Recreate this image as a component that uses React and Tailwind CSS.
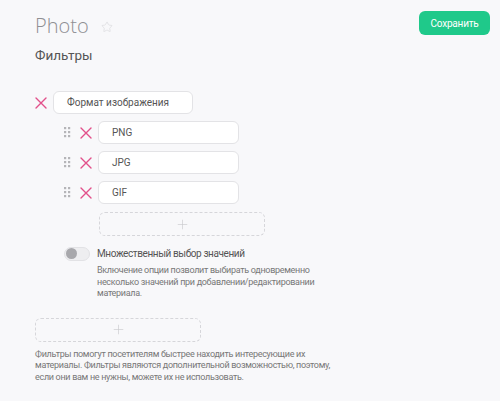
import { Star, Plus } from 'lucide-react'

function Dots() {
  return (
    <svg width="7" height="11" viewBox="0 0 7 11" className="text-[#b5b5b8]">
      {[0, 4, 8].map((y) =>
        [0, 4].map((x) => <rect key={`${x}-${y}`} x={x} y={y} width="2.2" height="2.2" fill="currentColor" />)
      )}
    </svg>
  )
}

function Cross({ className = '' }) {
  return (
    <svg width="12" height="12" viewBox="0 0 12 12" className={`text-[#e2508a] ${className}`}>
      <path d="M1 1L11 11M11 1L1 11" stroke="currentColor" strokeWidth="1.4" strokeLinecap="round" />
    </svg>
  )
}

function Field({ value, className = '' }) {
  return (
    <div
      className={`h-[23px] flex items-center bg-white border border-[#e3e3e6] rounded-[6px] text-[10px] text-[#555] ${className}`}
    >
      {value}
    </div>
  )
}

function AddBox({ className = '' }) {
  return (
    <div
      className={`h-[24px] flex items-center justify-center border border-dashed border-[#d6d6da] rounded-[6px] ${className}`}
    >
      <Plus size={15} strokeWidth={1} className="text-[#c8c8cc]" />
    </div>
  )
}

export default function App() {
  const values = ['PNG', 'JPG', 'GIF']
  return (
    <div className="w-[500px] h-[401px] bg-[#f8f8fa] font-['Roboto',sans-serif] overflow-hidden relative">
      <div className="pl-[35px] pt-[11px]">
        <div className="flex items-center gap-[12px] h-[30px]">
          <span className="font-['Open_Sans',sans-serif] font-light text-[20px] leading-[30px] text-[#8f8f93]">Photo</span>
          <Star size={12} strokeWidth={1.3} className="text-[#d8d8dc] mt-[1px]" />
        </div>
        <div className="mt-[4px] text-[13.5px] leading-[20px] text-[#555]">Фильтры</div>

        <div className="mt-[26px] flex items-center gap-[6px]">
          <Cross />
          <Field value="Формат изображения" className="w-[140px] pl-[13px]" />
        </div>

        <div className="mt-[7px] pl-[29px] flex flex-col gap-[7px]">
          {values.map((v) => (
            <div key={v} className="flex items-center">
              <Dots />
              <Cross className="ml-[9px]" />
              <Field value={v} className="w-[141px] pl-[13px] ml-[6px]" />
            </div>
          ))}
        </div>

        <AddBox className="mt-[8px] ml-[64px] w-[166px]" />

        <div className="mt-[10px] ml-[29px] flex items-center gap-[7px]">
          <div className="w-[26px] h-[14px] rounded-full bg-[#eeeef0] border border-[#e2e2e5] flex items-center px-[1px]">
            <div className="w-[11px] h-[11px] rounded-full bg-[#a8a8ac]" />
          </div>
          <span className="text-[10px] tracking-[-0.4px] text-[#555]">Множественный выбор значений</span>
        </div>
        <div className="mt-[4px] ml-[62px] text-[9px] tracking-[-0.3px] leading-[11.5px] text-[#777]">
          Включение опции позволит выбирать одновременно
          <br />
          несколько значений при добавлении/редактировании
          <br />
          материала.
        </div>

        <AddBox className="mt-[18px] w-[166px]" />

        <div className="mt-[7px] text-[9px] tracking-[-0.3px] leading-[11.5px] text-[#777]">
          Фильтры помогут посетителям быстрее находить интересующие их
          <br />
          материалы. Фильтры являются дополнительной возможностью, поэтому,
          <br />
          если они вам не нужны, можете их не использовать.
        </div>
      </div>

      <button className="absolute left-[419px] top-[11px] w-[71px] h-[24px] rounded-[6px] bg-[#1fc98a] text-white text-[10px] tracking-[-0.2px]">
        Сохранить
      </button>
    </div>
  )
}
